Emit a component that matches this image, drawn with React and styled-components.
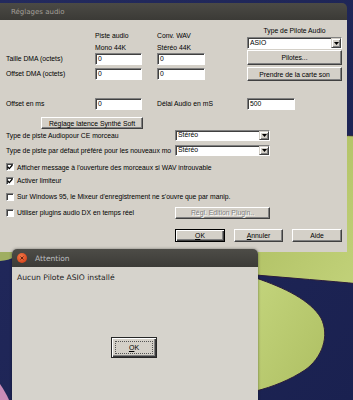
import React from 'react';
import styled, { createGlobalStyle } from 'styled-components';

const Global = createGlobalStyle`
  html, body { margin: 0; padding: 0; }
  body { width: 353px; height: 400px; overflow: hidden; background: #1d2454; }
`;

const Desktop = styled.div`
  position: relative;
  width: 353px;
  height: 400px;
  overflow: hidden;
  background: #1d2454;
`;

const Wallpaper = styled.svg`
  position: absolute;
  left: 0;
  top: 0;
  display: block;
`;

const MainWindow = styled.div`
  position: absolute;
  left: 0;
  top: 3px;
  width: 347px;
  font-family: "Liberation Sans", Arial, sans-serif;
  font-size: 6.8px;
  color: #000;
`;

const TitleBar = styled.div`
  height: 17px;
  box-sizing: border-box;
  background: linear-gradient(#4b4a45, #3b3a36);
  border-top-right-radius: 5px;
  display: flex;
  align-items: center;
  padding-left: 11px;
  color: #a29f98;
  font-family: "DejaVu Sans", sans-serif;
  font-size: 7px;
`;

const Body = styled.div`
  background: #d4d0c8;
  padding: 5px 5px 10px 6px;
  display: flex;
  flex-direction: column;
`;

const TopRow = styled.div`
  display: flex;
  justify-content: space-between;
  align-items: flex-start;
`;

const DmaGrid = styled.div`
  margin-top: 5px;
  display: grid;
  grid-template-columns: 89px 62px 48px;
  grid-template-rows: 23px 15px 12px;
  align-items: start;
`;

const ColHeader = styled.div`
  line-height: 11.5px;
  white-space: nowrap;
`;

const RowLabel = styled.div`
  line-height: 12px;
  white-space: nowrap;
`;

const Field = styled.div`
  width: ${p => p.$w}px;
  height: 12px;
  box-sizing: border-box;
  background: #fff;
  border: 1px solid;
  border-color: #808080 #fff #fff #808080;
  box-shadow: inset 1px 1px #404040;
  padding-left: 2px;
  line-height: 10px;
  white-space: nowrap;
`;

const DriverPanel = styled.div`
  width: 95px;
  display: flex;
  flex-direction: column;
  gap: 1px;
`;

const PanelLabel = styled.div`
  height: 11px;
  line-height: 11px;
  text-align: center;
  white-space: nowrap;
`;

const SelectBox = styled.div`
  width: ${p => p.$w}px;
  height: ${p => p.$h}px;
  box-sizing: border-box;
  background: #fff;
  border: 1px solid;
  border-color: #808080 #fff #fff #808080;
  box-shadow: inset 1px 1px #404040;
  display: flex;
  align-items: center;
  justify-content: space-between;
  padding-left: 2px;
  flex-shrink: 0;
`;

const SelectValue = styled.span`
  line-height: 1;
  white-space: nowrap;
`;

const ArrowButton = styled.span`
  width: 10px;
  align-self: stretch;
  box-sizing: border-box;
  background: #d4d0c8;
  border: 1px solid;
  border-color: #d4d0c8 #404040 #404040 #d4d0c8;
  box-shadow: inset 1px 1px #fff, inset -1px -1px #808080;
  display: flex;
  align-items: center;
  justify-content: center;
`;

const Button = styled.div`
  width: ${p => p.$w}px;
  height: ${p => p.$h}px;
  margin-top: ${p => p.$mt || 0}px;
  margin-left: ${p => p.$ml || 0}px;
  box-sizing: border-box;
  background: #d4d0c8;
  border: 1px solid;
  border-color: ${p => (p.$default ? '#000' : '#fff #404040 #404040 #fff')};
  box-shadow: ${p =>
    p.$default
      ? 'inset 1px 1px #fff, inset -1px -1px #404040, inset -2px -2px #808080'
      : 'inset -1px -1px #808080'};
  display: flex;
  align-items: center;
  justify-content: center;
  white-space: nowrap;
  flex-shrink: 0;
  color: ${p => (p.$disabled ? '#808080' : '#000')};
  text-shadow: ${p => (p.$disabled ? '1px 1px #fff' : 'none')};
`;

const Accel = styled.span`
  text-decoration: underline;
`;

const OffsetRow = styled.div`
  margin-top: 17px;
  display: grid;
  grid-template-columns: 89px 62px 90px 48px;
  align-items: center;
  height: 12px;
`;

const SelectRow = styled.div`
  margin-top: ${p => p.$mt}px;
  height: 11px;
  display: flex;
  align-items: center;
`;

const SelectLabel = styled.div`
  width: 169px;
  white-space: nowrap;
  overflow: visible;
`;

const CheckRow = styled.div`
  margin-top: ${p => p.$mt || 0}px;
  height: ${p => p.$h}px;
  display: flex;
  align-items: center;
`;

const CheckBox = styled.span`
  width: 8px;
  height: 8px;
  box-sizing: border-box;
  background: #fff;
  border: 1px solid;
  border-color: #808080 #fff #fff #808080;
  box-shadow: inset 1px 1px #404040;
  margin-right: 3px;
  flex-shrink: 0;
  display: flex;
  align-items: center;
  justify-content: center;
`;

const CheckText = styled.span`
  white-space: nowrap;
  ${p => (p.$w ? `width: ${p.$w}px;` : '')}
`;

const BottomRow = styled.div`
  margin-top: 10px;
  display: flex;
  justify-content: flex-end;
  gap: 9px;
`;

const AlertWindow = styled.div`
  position: absolute;
  left: 12px;
  top: 249px;
  width: 246px;
  height: 160px;
  background: #d6d3cc;
  border-radius: 5px 5px 0 0;
  overflow: hidden;
  font-family: "DejaVu Sans", sans-serif;
  box-shadow: 0 0 3px rgba(0, 0, 0, 0.45);
`;

const AlertTitle = styled.div`
  height: 18px;
  background: linear-gradient(#4d4c47, #3c3b37);
  display: flex;
  align-items: center;
  padding-left: 5px;
  gap: 8px;
  color: #bdbfc0;
  font-size: 7.5px;
`;

const CloseDot = styled.span`
  width: 10px;
  height: 10px;
  border-radius: 50%;
  background: radial-gradient(circle at 40% 35%, #f27a4a, #d9481f 70%, #b63a19);
  display: flex;
  align-items: center;
  justify-content: center;
`;

const AlertBody = styled.div`
  padding: 6px 0 0 5px;
  display: flex;
  flex-direction: column;
  align-items: flex-start;
`;

const AlertText = styled.div`
  font-size: 7.6px;
  line-height: 10px;
  color: #1c1c1c;
  white-space: nowrap;
`;

const AlertButton = styled.div`
  margin-top: 54px;
  margin-left: 94px;
  width: 46px;
  height: 21px;
  box-sizing: border-box;
  background: #d4d0c8;
  border: 1px solid #262626;
  box-shadow: inset 1px 1px #fff, inset -1px -1px #3a3a3a, inset -2px -2px #808080;
  padding: 3px;
  display: flex;
  font-family: "Liberation Sans", Arial, sans-serif;
  font-size: 7px;
  color: #000;
`;

const FocusRect = styled.span`
  flex: 1;
  border: 1px dotted #555;
  display: flex;
  align-items: center;
  justify-content: center;
`;

const Arrow = () => (
  <svg width="5" height="3" viewBox="0 0 5 3">
    <polygon points="0,0 5,0 2.5,3" fill="#000" />
  </svg>
);

const Check = () => (
  <svg width="6" height="6" viewBox="0 0 6 6">
    <path d="M0.6 2.8 L2.3 4.6 L5.4 1" fill="none" stroke="#000" strokeWidth="1.3" />
  </svg>
);

const Select = ({ w, h, value }) => (
  <SelectBox $w={w} $h={h}>
    <SelectValue>{value}</SelectValue>
    <ArrowButton>
      <Arrow />
    </ArrowButton>
  </SelectBox>
);

export default function App() {
  return (
    <Desktop>
      <Global />
      <Wallpaper width="353" height="400" viewBox="0 0 353 400">
        <defs>
          <linearGradient id="padA" x1="0" y1="0" x2="1" y2="1">
            <stop offset="0" stopColor="#a9b95b" />
            <stop offset="1" stopColor="#c2d27a" />
          </linearGradient>
          <linearGradient id="padB" x1="0" y1="0" x2="1" y2="1">
            <stop offset="0" stopColor="#c3d47c" />
            <stop offset="1" stopColor="#aebf62" />
          </linearGradient>
          <linearGradient id="navy" x1="0" y1="0" x2="1" y2="1">
            <stop offset="0" stopColor="#232a5e" />
            <stop offset="1" stopColor="#1a2150" />
          </linearGradient>
        </defs>
        <rect width="353" height="400" fill="url(#navy)" />
        <path
          d="M250 150 C290 140 330 134 360 136 L360 284 C330 281 290 278 256 275 Z"
          fill="url(#padA)"
          stroke="#2a1c3c"
          strokeWidth="1"
        />
        <path
          d="M256 278 C285 288 310 300 321 318 C330 336 322 358 305 370 C290 380 272 387 256 391 Z"
          fill="url(#padB)"
          stroke="#2a1c3c"
          strokeWidth="1"
        />
        <path d="M-2 248 L16 248 L16 256 C10 260 4 261 -2 261 Z" fill="#9fae62" />
        <path d="M0 384 C4 390 7 395 9 400 L0 400 Z" fill="#c98bb7" />
      </Wallpaper>

      <MainWindow>
        <TitleBar>Réglages audio</TitleBar>
        <Body>
          <TopRow>
            <DmaGrid>
              <span />
              <ColHeader>
                Piste audio
                <br />
                Mono 44K
              </ColHeader>
              <ColHeader>
                Conv. WAV
                <br />
                Stéréo 44K
              </ColHeader>
              <RowLabel>Taille DMA (octets)</RowLabel>
              <Field $w={47}>0</Field>
              <Field $w={48}>0</Field>
              <RowLabel>Offset DMA (octets)</RowLabel>
              <Field $w={47}>0</Field>
              <Field $w={48}>0</Field>
            </DmaGrid>
            <DriverPanel>
              <PanelLabel>Type de Pilote Audio</PanelLabel>
              <Select w={95} h={12} value="ASIO" />
              <Button $w={95} $h={15}>Pilotes...</Button>
              <Button $w={95} $h={14} $mt={1}>
                Prendre de la carte son
              </Button>
            </DriverPanel>
          </TopRow>

          <OffsetRow>
            <RowLabel>Offset en ms</RowLabel>
            <Field $w={47}>0</Field>
            <RowLabel>Délai Audio en mS</RowLabel>
            <Field $w={48}>500</Field>
          </OffsetRow>

          <Button $w={102} $h={12} $mt={7} $ml={35}>
            Réglage latence Synthé Soft
          </Button>

          <SelectRow $mt={1}>
            <SelectLabel>Type de piste Audiopour CE morceau</SelectLabel>
            <Select w={95} h={11} value="Stéréo" />
          </SelectRow>
          <SelectRow $mt={4}>
            <SelectLabel>Type de piste par défaut préféré pour les nouveaux mo</SelectLabel>
            <Select w={95} h={11} value="Stéréo" />
          </SelectRow>

          <CheckRow $mt={4} $h={14}>
            <CheckBox>
              <Check />
            </CheckBox>
            <CheckText>Afficher message à l'ouverture des morceaux si WAV introuvable</CheckText>
          </CheckRow>
          <CheckRow $h={13}>
            <CheckBox>
              <Check />
            </CheckBox>
            <CheckText>Activer limiteur</CheckText>
          </CheckRow>
          <CheckRow $mt={3} $h={13}>
            <CheckBox />
            <CheckText>Sur Windows 95, le Mixeur d'enregistrement ne s'ouvre que par manip.</CheckText>
          </CheckRow>
          <CheckRow $mt={3} $h={13}>
            <CheckBox />
            <CheckText $w={158}>Utiliser plugins audio DX en temps réel</CheckText>
            <Button $w={95} $h={12} $disabled>
              Régl. Edition Plugin..
            </Button>
          </CheckRow>

          <BottomRow>
            <Button $w={50} $h={13} $default>
              <Accel>O</Accel>K
            </Button>
            <Button $w={49} $h={13}>
              <Accel>A</Accel>nnuler
            </Button>
            <Button $w={50} $h={13}>
              Aide
            </Button>
          </BottomRow>
        </Body>
      </MainWindow>

      <AlertWindow>
        <AlertTitle>
          <CloseDot>
            <svg width="4" height="4" viewBox="0 0 4 4">
              <path d="M0.5 0.5 L3.5 3.5 M3.5 0.5 L0.5 3.5" stroke="#5a1d0c" strokeWidth="0.9" />
            </svg>
          </CloseDot>
          Attention
        </AlertTitle>
        <AlertBody>
          <AlertText>Aucun Pilote ASIO installé</AlertText>
          <AlertButton>
            <FocusRect>
              <Accel>O</Accel>K
            </FocusRect>
          </AlertButton>
        </AlertBody>
      </AlertWindow>
    </Desktop>
  );
}
